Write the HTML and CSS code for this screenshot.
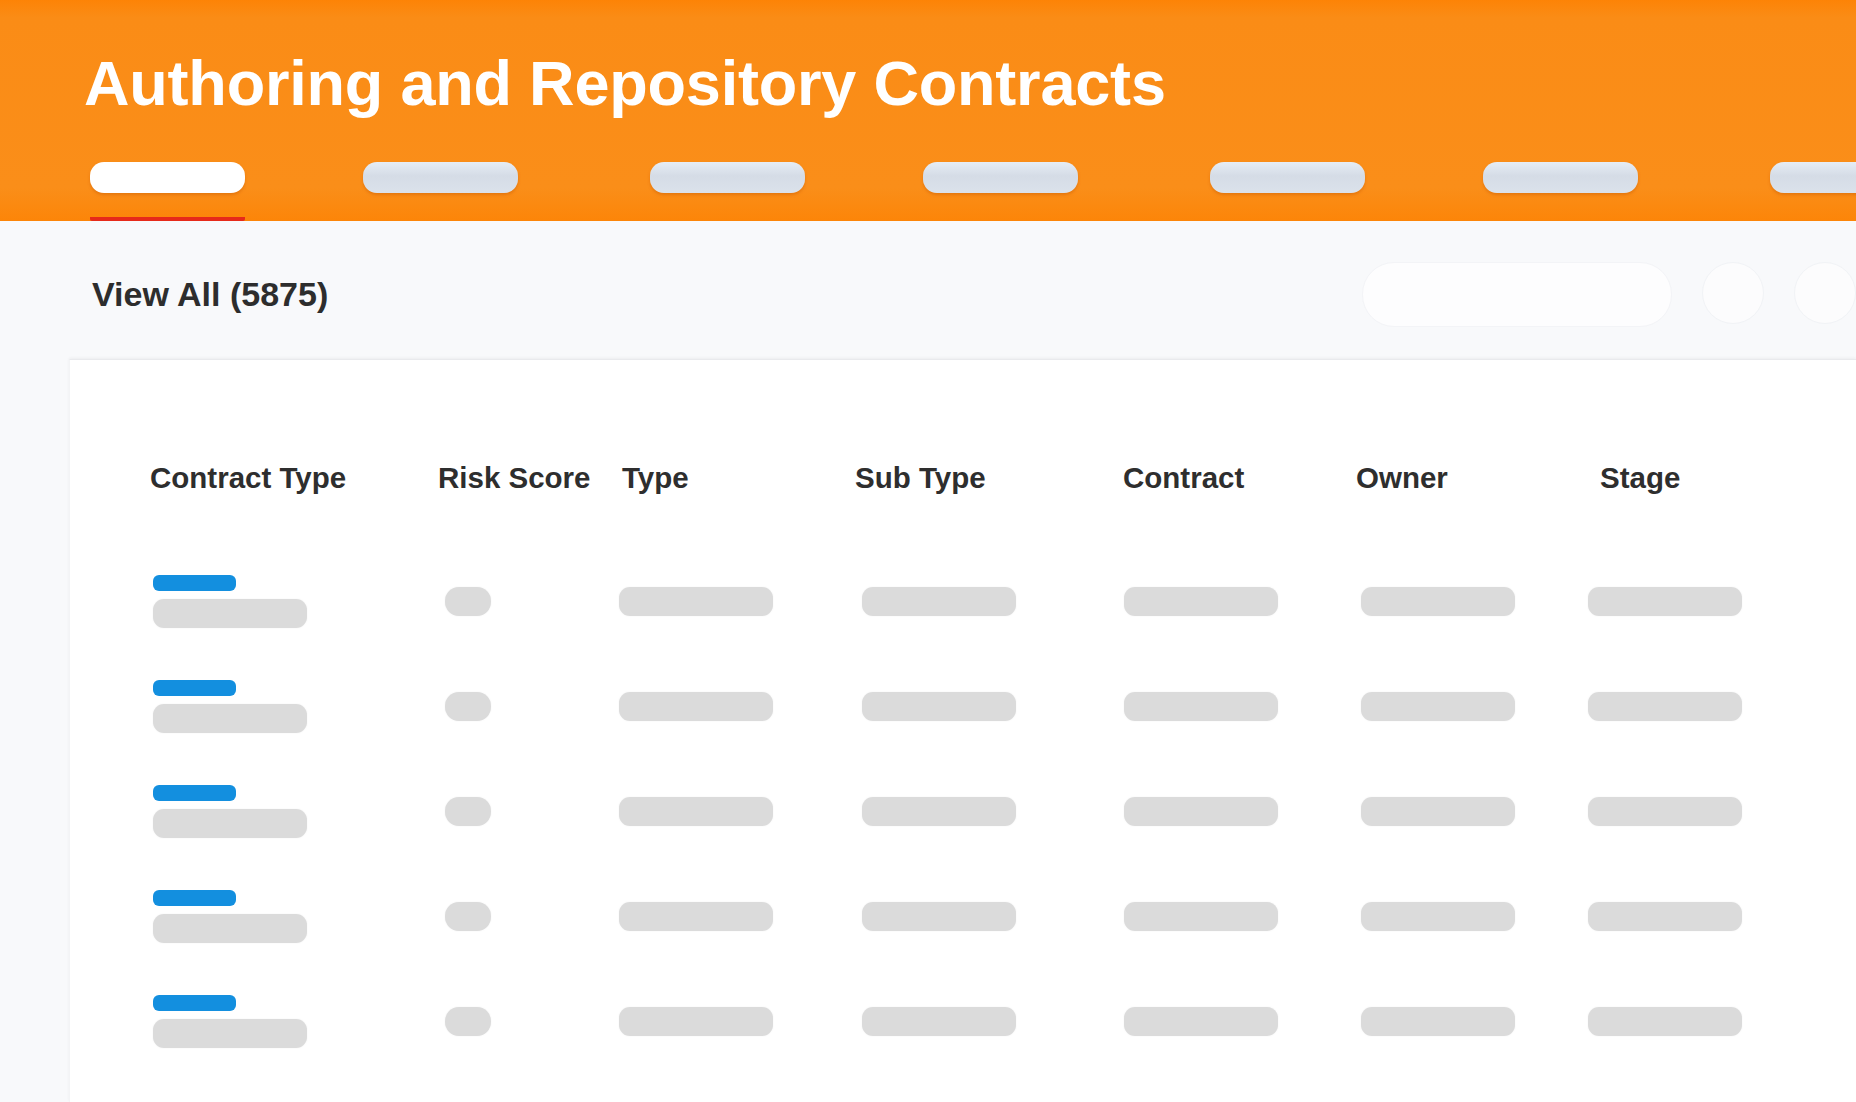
FILE: index.html
```html
<!DOCTYPE html>
<html lang="en">
<head>
  <meta charset="UTF-8">
  <meta name="viewport" content="width=device-width, initial-scale=1.0">
  <title>Authoring and Repository Contracts</title>
  <link rel="stylesheet" href="styles.css">
</head>
<body>
  <header class="top">
    <h1>Authoring and Repository Contracts</h1>
    <nav class="tabs">
      <div class="tab active"><span class="pill"></span></div>
      <div class="tab"><span class="pill"></span></div>
      <div class="tab"><span class="pill"></span></div>
      <div class="tab"><span class="pill"></span></div>
      <div class="tab"><span class="pill"></span></div>
      <div class="tab"><span class="pill"></span></div>
      <div class="tab"><span class="pill"></span></div>
    </nav>
  </header>

  <div class="toolbar">
    <h2 class="count">View All (5875)</h2>
    <div class="search"></div>
    <div class="round"></div>
    <div class="round"></div>
  </div>

  <main class="panel">
    <div class="thead">
      <div>Contract Type</div>
      <div>Risk Score</div>
      <div>Type</div>
      <div>Sub Type</div>
      <div>Contract</div>
      <div>Owner</div>
      <div>Stage</div>
    </div>

    <div class="tbody">
      <div class="row">
        <div class="name"><span class="tag"></span><span class="bar"></span></div>
        <div><span class="dot"></span></div>
        <div><span class="bar"></span></div>
        <div><span class="bar"></span></div>
        <div><span class="bar"></span></div>
        <div><span class="bar"></span></div>
        <div><span class="bar"></span></div>
      </div>
      <div class="row">
        <div class="name"><span class="tag"></span><span class="bar"></span></div>
        <div><span class="dot"></span></div>
        <div><span class="bar"></span></div>
        <div><span class="bar"></span></div>
        <div><span class="bar"></span></div>
        <div><span class="bar"></span></div>
        <div><span class="bar"></span></div>
      </div>
      <div class="row">
        <div class="name"><span class="tag"></span><span class="bar"></span></div>
        <div><span class="dot"></span></div>
        <div><span class="bar"></span></div>
        <div><span class="bar"></span></div>
        <div><span class="bar"></span></div>
        <div><span class="bar"></span></div>
        <div><span class="bar"></span></div>
      </div>
      <div class="row">
        <div class="name"><span class="tag"></span><span class="bar"></span></div>
        <div><span class="dot"></span></div>
        <div><span class="bar"></span></div>
        <div><span class="bar"></span></div>
        <div><span class="bar"></span></div>
        <div><span class="bar"></span></div>
        <div><span class="bar"></span></div>
      </div>
      <div class="row">
        <div class="name"><span class="tag"></span><span class="bar"></span></div>
        <div><span class="dot"></span></div>
        <div><span class="bar"></span></div>
        <div><span class="bar"></span></div>
        <div><span class="bar"></span></div>
        <div><span class="bar"></span></div>
        <div><span class="bar"></span></div>
      </div>
    </div>
  </main>
</body>
</html>
```

FILE: styles.css
```css
html, body {
  height: 100%;
}
body {
  margin: 0;
  font-family: 'Liberation Sans', Arial, sans-serif;
  background-color: #f8f9fb;
  color: #2e2e2e;
  overflow: hidden;
  display: flex;
  flex-direction: column;
}
.top {
  background: linear-gradient(#fd8306, #fa8c16 8%, #fa8e19 85%, #fc8508);
  padding-top: 52px;
  overflow: hidden;
  flex-shrink: 0;
}
h1 {
  margin: 0 0 0 84px;
  font-size: 63px;
  line-height: 1;
  font-weight: bold;
  letter-spacing: -0.2px;
  color: #fff;
  white-space: nowrap;
}
.tabs {
  display: flex;
  margin-top: 47px;
  padding-left: 90px;
}
.tab {
  flex-shrink: 0;
  padding-bottom: 24px;
  border-bottom: 4px solid transparent;
}
.tab:nth-child(even) {
  margin-left: 118px;
}
.tab:nth-child(odd) {
  margin-left: 132px;
}
.tab:first-child {
  margin-left: 0;
}
.tab.active {
  border-bottom-color: #e62a1a;
  border-radius: 2px;
}
.pill {
  display: block;
  width: 155px;
  height: 31px;
  border-radius: 14px;
  background: linear-gradient(#e6edf5, #d5dce6 45%, #dbe2eb);
  box-shadow: 0 2px 3px rgba(190, 80, 0, 0.35);
}
.tab.active .pill {
  background: #fff;
}
.toolbar {
  display: flex;
  align-items: flex-start;
  height: 138px;
  padding: 41px 0 0 92px;
  box-sizing: border-box;
  flex-shrink: 0;
  overflow: hidden;
}
.count {
  margin: 15px 0 0;
  font-size: 34px;
  line-height: 1;
  font-weight: bold;
  color: #2d2d2d;
}
.search {
  margin-left: auto;
  width: 308px;
  height: 63px;
  border-radius: 32px;
  background-color: #fdfdfe;
  border: 1px solid #f3f4f7;
  flex-shrink: 0;
}
.round {
  width: 60px;
  height: 60px;
  margin-left: 30px;
  border-radius: 50%;
  border: 1px solid #f1f3f6;
  background-color: #fcfcfd;
  flex-shrink: 0;
}
.panel {
  flex: 1;
  margin-left: 69px;
  background-color: #fff;
  border-top: 1px solid #e9eaed;
  border-left: 1px solid #f3f4f6;
  box-shadow: 0 -1px 3px rgba(0, 0, 0, 0.05);
  padding-top: 103px;
}
.thead {
  display: grid;
  grid-template-columns: 288px 184px 233px 268px 233px 244px 1fr;
  padding-left: 80px;
  font-size: 29.5px;
  line-height: 1;
  font-weight: bold;
  color: #2e2e2e;
  white-space: nowrap;
}
.tbody {
  margin-top: 56px;
  padding-left: 83px;
}
.row {
  display: grid;
  grid-template-columns: 292px 174px 243px 262px 237px 227px 1fr;
  align-items: center;
  height: 105px;
}
.name {
  display: flex;
  flex-direction: column;
  gap: 8px;
}
.tag {
  display: block;
  width: 83px;
  height: 16px;
  border-radius: 6px;
  background-color: #138fdf;
}
.bar {
  display: block;
  width: 154px;
  height: 29px;
  border-radius: 11px;
  background-color: #dbdbdb;
  box-shadow: 0 0 2px rgba(0, 0, 0, 0.06);
}
.dot {
  display: block;
  width: 46px;
  height: 29px;
  border-radius: 14px;
  background-color: #dbdbdb;
  box-shadow: 0 0 2px rgba(0, 0, 0, 0.06);
}
```
